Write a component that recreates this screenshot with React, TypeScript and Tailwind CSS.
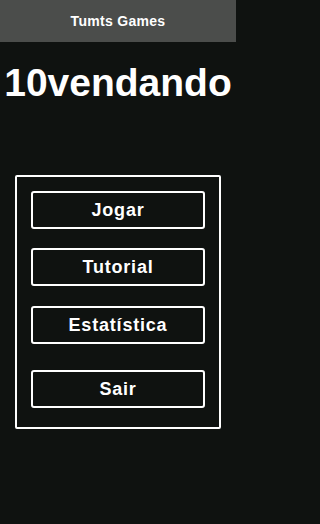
import React from "react";

const items = [
  { label: "Jogar", mt: "mt-0" },
  { label: "Tutorial", mt: "mt-[19px]" },
  { label: "Estatística", mt: "mt-[20px]" },
  { label: "Sair", mt: "mt-[26px]" },
];

const App: React.FC = () => {
  return (
    <div className="min-h-screen w-full bg-[#0f1210] font-['Liberation_Sans',Arial,sans-serif] text-white">
      <div className="w-[236px]">
        {/* Header */}
        <header className="flex h-[42px] items-center justify-center bg-[#4b4d4b]">
          <h1 className="text-[14px] font-bold tracking-[0.3px]">Tumts Games</h1>
        </header>

        {/* Title */}
        <h2 className="mt-[21px] text-center text-[39px] font-bold leading-none">10vendando</h2>

        {/* Menu */}
        <main className="mx-[15px] mt-[73px] w-[206px] rounded-[2px] border-2 border-white pb-[19px] pl-[14px] pr-[14px] pt-[14px]">
          {items.map((item) => (
            <button
              key={item.label}
              className={`${item.mt} flex h-[38px] w-full items-center justify-center rounded-[3px] border-2 border-white text-[18px] font-bold tracking-[0.8px]`}
            >
              {item.label}
            </button>
          ))}
        </main>
      </div>
    </div>
  );
};

export default App;
